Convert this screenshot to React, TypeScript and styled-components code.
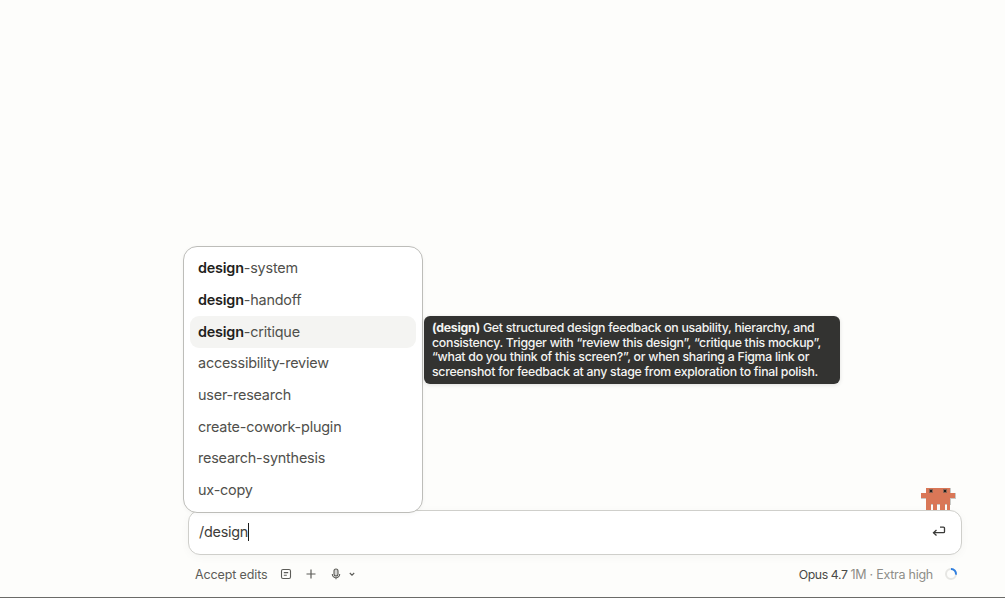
import React from 'react';
import styled, { createGlobalStyle } from 'styled-components';

const GlobalStyle = createGlobalStyle`
  html, body {
    margin: 0;
    padding: 0;
    height: 100%;
    overflow: hidden;
    background: #fdfdfb;
    font-family: Inter, "Liberation Sans", sans-serif;
  }
`;

const Page = styled.div`
  width: 1005px;
  height: 598px;
  box-sizing: border-box;
  border-bottom: 1px solid #6b6b68;
  display: flex;
  flex-direction: column;
  justify-content: flex-end;
  padding: 0 43px 8px 188px;
`;

const Composer = styled.div`
  position: relative;
  display: flex;
  flex-direction: column;
`;

const InputBox = styled.div`
  height: 45px;
  box-sizing: border-box;
  background: #fff;
  border: 1px solid #cfcfcb;
  border-radius: 12px;
  box-shadow: 0 2px 10px rgba(0, 0, 0, 0.035);
  display: flex;
  align-items: center;
  justify-content: space-between;
  padding: 0 14px 1px 10px;
`;

const InputText = styled.span`
  font-size: 14.4px;
  letter-spacing: -0.25px;
  color: #3d3d3a;
  border-right: 1.5px solid #1c1c1a;
  line-height: 18px;
`;

const ReturnIcon = styled.svg`
  width: 16px;
  height: 16px;
  color: #3a3a38;
`;

const Footer = styled.div`
  height: 34px;
  display: flex;
  align-items: center;
  justify-content: space-between;
  padding: 4px 4px 0 7px;
  box-sizing: border-box;
`;

const FooterGroup = styled.div`
  display: flex;
  align-items: center;
`;

const ModeLabel = styled.span`
  font-size: 12.5px;
  letter-spacing: -0.12px;
  color: #5c5c58;
  margin-right: 11px;
`;

const ToolIcon = styled.svg<{ $gap?: number }>`
  width: 14px;
  height: 14px;
  color: #5c5c58;
  margin-right: ${p => p.$gap ?? 0}px;
`;

const ModelName = styled.span`
  font-size: 12.3px;
  letter-spacing: -0.4px;
  color: #4a4a47;
`;

const ModelMeta = styled.span`
  font-size: 12.5px;
  letter-spacing: -0.26px;
  color: #8d8d88;
  margin-left: 3px;
  margin-right: 11px;
`;

const Spinner = styled.svg`
  width: 14px;
  height: 14px;
`;

const Menu = styled.ul`
  position: absolute;
  left: -5px;
  bottom: 76px;
  width: 240px;
  height: 267px;
  box-sizing: border-box;
  margin: 0;
  padding: 6px;
  list-style: none;
  background: #fff;
  border: 1px solid #bdbdb9;
  border-radius: 14px;
  display: flex;
  flex-direction: column;
  box-shadow: 0 1px 4px rgba(0, 0, 0, 0.04);
  z-index: 2;
`;

const MenuItem = styled.li<{ $active?: boolean }>`
  height: 31.65px;
  flex: none;
  box-sizing: border-box;
  display: flex;
  align-items: center;
  padding: 0 8px 2px;
  border-radius: 9px;
  font-size: 14.4px;
  letter-spacing: -0.2px;
  color: #50504c;
  background: ${p => (p.$active ? '#f4f4f2' : 'transparent')};
  white-space: pre;
`;

const Match = styled.b`
  font-weight: 600;
  color: #1f1f1d;
`;

const Tooltip = styled.div`
  position: absolute;
  left: 236px;
  bottom: 205px;
  width: 416px;
  height: 68px;
  box-sizing: border-box;
  padding: 5px 8px;
  background: #333331;
  border-radius: 6px;
  color: #f4f4f1;
  font-size: 12.3px;
  font-weight: 500;
  line-height: 14.6px;
  letter-spacing: -0.26px;
  white-space: nowrap;
  box-shadow: 0 1px 4px rgba(0, 0, 0, 0.12);
  z-index: 3;
`;

const Mascot = styled.svg`
  position: absolute;
  right: 6px;
  top: -24px;
  width: 36px;
  height: 24px;
`;

const skills = [
  ['design', '-system'],
  ['design', '-handoff'],
  ['design', '-critique'],
  ['', 'accessibility-review'],
  ['', 'user-research'],
  ['', 'create-cowork-plugin'],
  ['', 'research-synthesis'],
  ['', 'ux-copy'],
];

const mascotHalo = 'M6 2h24v5h5v5h-5v6H6v-6H1V7h5z';
const mascotBody = 'M6 2h24v5h5v5h-5v12h-3v-6h-2v6h-5v-6h-3v6h-4v-6h-2v6H6V12H1V7h5z';

export default function App() {
  return (
    <>
      <GlobalStyle />
      <Page>
        <Composer>
          <Menu>
            {skills.map(([match, rest], i) => (
              <MenuItem key={rest} $active={i === 2}>
                {match && <Match>{match}</Match>}
                {rest}
              </MenuItem>
            ))}
          </Menu>
          <Tooltip>
            <b>(design)</b> Get structured design feedback on usability, hierarchy, and
            <br />
            consistency. Trigger with “review this design”, “critique this mockup”,
            <br />
            “what do you think of this screen?”, or when sharing a Figma link or
            <br />
            screenshot for feedback at any stage from exploration to final polish.
          </Tooltip>
          <Mascot viewBox="0 0 36 24" shapeRendering="crispEdges">
            <path fill="#c9c9c6" stroke="#c9c9c6" strokeWidth="1" d={mascotHalo} />
            <path fill="#d97757" d={mascotBody} />
            <path fill="#8c6554" d="M9 3h4v4H9zM23 3h4v4h-4z" />
            <path fill="#1f1f1d" d="M10 4h2v2h-2zM24 4h2v2h-2z" />
          </Mascot>
          <InputBox>
            <InputText>/design</InputText>
            <ReturnIcon viewBox="0 0 16 16" fill="none" stroke="currentColor" strokeWidth="1.3">
              <path d="M9 3.2h3.5a1 1 0 0 1 1 1v3.5a1 1 0 0 1-1 1H2.5" />
              <path d="M5.5 6l-3 2.7 3 2.8" />
            </ReturnIcon>
          </InputBox>
          <Footer>
            <FooterGroup>
              <ModeLabel>Accept edits</ModeLabel>
              <ToolIcon $gap={11} viewBox="0 0 14 14" fill="none" stroke="currentColor" strokeWidth="1.1">
                <rect x="2.5" y="2.5" width="9" height="9" rx="1.5" />
                <path d="M4.8 5.6h4.4M4.8 8.2h3" />
              </ToolIcon>
              <ToolIcon $gap={11} viewBox="0 0 14 14" fill="none" stroke="currentColor" strokeWidth="1.2">
                <path d="M7 2.5v9M2.5 7h9" />
              </ToolIcon>
              <ToolIcon $gap={2} viewBox="0 0 14 14" fill="none" stroke="currentColor" strokeWidth="1.1">
                <rect x="5" y="2" width="4" height="7" rx="2" fill="currentColor" fillOpacity="0.25" />
                <path d="M3.3 7a3.7 3.7 0 0 0 7.4 0M7 10.7v1.6" />
              </ToolIcon>
              <ToolIcon viewBox="0 0 14 14" fill="none" stroke="currentColor" strokeWidth="1.1">
                <path d="M4.8 6l2.2 2.2L9.2 6" />
              </ToolIcon>
            </FooterGroup>
            <FooterGroup>
              <ModelName>Opus 4.7</ModelName>
              <ModelMeta>1M · Extra high</ModelMeta>
              <Spinner viewBox="0 0 14 14" fill="none" strokeWidth="2">
                <circle cx="7" cy="7" r="5" stroke="#e6e6e3" />
                <path d="M7 2a5 5 0 0 1 5 5.6" stroke="#2f7fe0" />
              </Spinner>
            </FooterGroup>
          </Footer>
        </Composer>
      </Page>
    </>
  );
}
